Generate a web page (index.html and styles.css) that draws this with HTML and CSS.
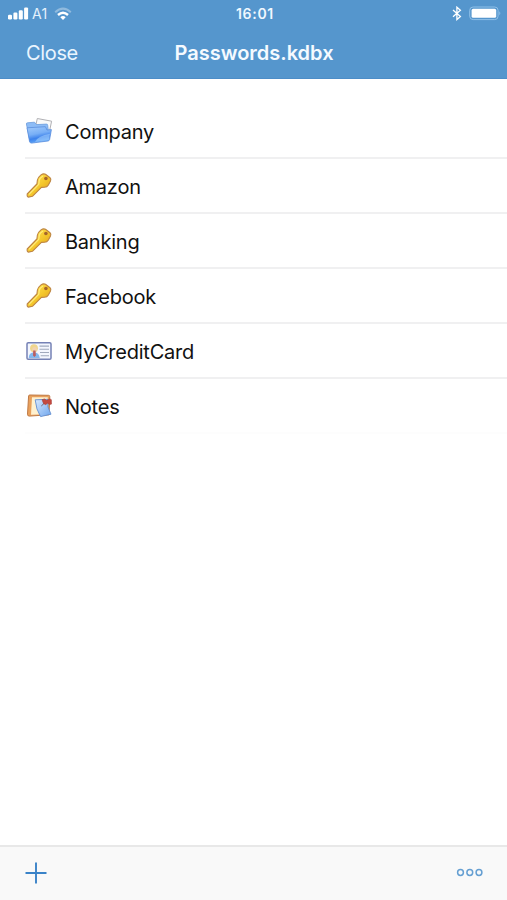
FILE: index.html
```
<!DOCTYPE html>
<html lang="en">
    <head>
        <meta charset="utf-8">
        <title>Passwords.kdbx</title>
        <link rel="stylesheet" href="styles.css">
    </head>
    <body>
        <svg class="defs" width="0" height="0">
            <defs>
                <linearGradient id="folderFill" x1="0" y1="0" x2="0.3" y2="1">
                    <stop offset="0" stop-color="#a3cbfb"/>
                    <stop offset="0.5" stop-color="#78aff6"/>
                    <stop offset="0.75" stop-color="#3d82ec"/>
                    <stop offset="1" stop-color="#5ea6f8"/>
                </linearGradient>
                <linearGradient id="keyFill" x1="0" y1="0" x2="1" y2="1">
                    <stop offset="0.2" stop-color="#ffe04f"/>
                    <stop offset="0.55" stop-color="#f3c52a"/>
                    <stop offset="0.9" stop-color="#dc9a25"/>
                </linearGradient>
                <linearGradient id="noteFill" x1="0" y1="0" x2="1" y2="1">
                    <stop offset="0" stop-color="#d8e9ff"/>
                    <stop offset="1" stop-color="#6ea6ee"/>
                </linearGradient>
                <symbol id="key" viewBox="0 0 28 28">
                    <path d="M16 2.9Q18.5 1.2 20.5 2.3L25 5.7Q26.4 7 25.5 9L23.4 13Q22 15.4 19.3 15.3L16.4 15.4 7.4 24.3 3.4 25.1Q1.9 25 2.2 22L11.9 12 12.4 8Q12.8 5.5 16 2.9Z" fill="url(#keyFill)" stroke="#bd8442" stroke-width="1.1" stroke-linejoin="round"/>
                    <path d="M4 22.4 13.8 12.3 14.3 8Q14.8 6 18 4" fill="none" stroke="#ffec7e" stroke-width="1.2"/>
                    <circle cx="20.9" cy="6.5" r="1.8" fill="#a5642b"/>
                </symbol>
            </defs>
        </svg>
        <div class="header">
            <div class="statusbar">
                <div class="statusleft">
                    <svg class="signal" width="21" height="13" viewBox="0 0 21 13" fill="#fff">
                        <rect x="0" y="7.7" width="4" height="4.8" rx="1.2"/>
                        <rect x="5.4" y="5.5" width="4" height="7" rx="1.2"/>
                        <rect x="10.8" y="3.2" width="4" height="9.3" rx="1.2"/>
                        <rect x="16.1" y="0.4" width="4" height="12.1" rx="1.2"/>
                    </svg>
                    <span class="carrier">A1</span>
                    <svg class="wifi" width="18" height="14" viewBox="0 0 18 14" fill="none" stroke="#fff" stroke-width="2">
                        <path d="M1.2 5.2Q9-2 16.8 5.2" opacity="0.35"/>
                        <path d="M4 8Q9 3.5 14 8" stroke-width="2.4"/>
                        <path d="M6.3 10.2Q9 8 11.7 10.2L9 12.9Z" fill="#fff" stroke="none"/>
                    </svg>
                </div>
                <div class="clock">16:01</div>
                <div class="statusright">
                    <svg width="10" height="15" viewBox="0 0 10 15" fill="none" stroke="#fff" stroke-width="1.3">
                        <path d="M1 4 8.4 10.6 4.9 13.6V1.2L8.4 4.3 1 10.8"/>
                    </svg>
                    <svg width="33" height="15" viewBox="0 0 33 15">
                        <rect x="0.7" y="1" width="28.4" height="12.6" rx="3.4" fill="none" stroke="#8fc0e8" stroke-width="1"/>
                        <rect x="2.6" y="2.8" width="24.6" height="9" rx="1.6" fill="#fff"/>
                        <path d="M30.3 5.3Q32.4 7.3 30.3 9.3Z" fill="#8fc0e8"/>
                    </svg>
                </div>
            </div>
            <div class="navbar">
                <div class="close">Close</div>
                <div class="title">Passwords.kdbx</div>
                <div></div>
            </div>
        </div>
        <div class="list">
            <div class="row">
                <svg class="icon" viewBox="0 0 28 28">
                    <path d="M12.3 1.5 26.6 4.2 23.5 19 9 16.5Z" fill="#fafafa" stroke="#b0b0b4" stroke-width="1"/>
                    <path d="M1.4 7Q1.3 5.8 2.5 5.8L9.5 5.2 11.5 7.6 21.4 7.1Q22.6 7 22.7 8.2L24 20 5 24.5Z" fill="#8dbcf6" stroke="#6d9ddc" stroke-width="0.8"/>
                    <path d="M2 10.8 20.4 9.7 22 13 26.4 12.6 24.6 22.6Q24.3 23.8 23 24L6.6 26.1Q5.1 26.2 4.6 24.8Z" fill="url(#folderFill)" stroke="#5a8edd" stroke-width="0.8" stroke-linejoin="round"/>
                    <path d="M10 25Q13 18.6 25 16.8L23.9 22.4Q23.7 23.2 23 23.3Z" fill="#b3dcff" opacity="0.5"/>
                </svg>
                <span class="name">Company</span>
            </div>
            <div class="row">
                <svg class="icon"><use href="#key"/></svg>
                <span class="name">Amazon</span>
            </div>
            <div class="row">
                <svg class="icon"><use href="#key"/></svg>
                <span class="name">Banking</span>
            </div>
            <div class="row">
                <svg class="icon"><use href="#key"/></svg>
                <span class="name">Facebook</span>
            </div>
            <div class="row">
                <svg class="icon" viewBox="0 0 28 28">
                    <rect x="2" y="5.8" width="24" height="16.5" rx="1.3" fill="#f3f6fe" stroke="#7581b5" stroke-width="1.5"/>
                    <path d="M3.7 20.9Q4 15.5 9 15.2 14 15.5 14.8 20.9Z" fill="#84b8ed"/>
                    <circle cx="9" cy="11.2" r="3.9" fill="#efd68e"/>
                    <circle cx="9.6" cy="12.3" r="2.4" fill="#f2d3b0"/>
                    <path d="M8.2 13.5H10.5L10.9 18.5 9.4 20 8 18.5Z" fill="#ba5f61"/>
                    <path d="M14.5 9.1H24M14.5 12.3H24M15 15.5H24M15.7 18.7H24" stroke="#a0a9bd" stroke-width="1.1"/>
                </svg>
                <span class="name">MyCreditCard</span>
            </div>
            <div class="row">
                <svg class="icon" viewBox="0 0 28 28">
                    <path d="M3.6 4Q3.7 3 4.8 3L23.5 3.3Q24.8 3.3 24.8 4.6L24 22.8 4.2 24.1Q2.4 24 2.5 22.2Z" fill="#e8a05c" stroke="#c07a45" stroke-width="1" stroke-linejoin="round"/>
                    <path d="M7 5.2 22.8 5.2 22 22.2 6 22.8Z" fill="#fff1cf"/>
                    <path d="M10.2 7.8 22.8 7.3Q21.5 15 26 22.2L15.6 24.6Q11 17.5 10.2 7.8Z" fill="url(#noteFill)" stroke="#638fd0" stroke-width="0.9"/>
                    <path d="M16.3 14 19.3 11.2" stroke="#6c6875" stroke-width="1"/>
                    <path d="M17 7.7 19.5 6.9 21.5 8.3 25 6.9 26.4 7.7 26.5 12.1 25 12.6 22.4 11.2 20.8 12.7 18.6 11.7Z" fill="#c4493f" stroke="#a23b35" stroke-width="0.5"/>
                </svg>
                <span class="name">Notes</span>
            </div>
        </div>
        <div class="toolbar">
            <svg width="22" height="22" viewBox="0 0 22 22" fill="none" stroke="#3a83c8" stroke-width="1.9">
                <path d="M11 0.5V21.5M0.5 11H21.5"/>
            </svg>
            <svg width="27" height="9" viewBox="0 0 27 9" fill="none" stroke="#659fd2" stroke-width="1.5">
                <circle cx="4.5" cy="4.5" r="2.9"/>
                <circle cx="13.8" cy="4.5" r="2.9"/>
                <circle cx="23" cy="4.5" r="2.9"/>
            </svg>
        </div>
    </body>
</html>
```
FILE: styles.css
```
*{
    box-sizing: border-box;
}
body{
    margin: 0;
    height: 900px;
    display: flex;
    flex-direction: column;
    background-color: white;
    color: #111;
    font-family: Inter, "Liberation Sans", sans-serif;
    font-size: 20px;
    overflow: hidden;
}
svg{
    display: block;
    flex-shrink: 0;
}
.defs{
    position: absolute;
}
.header{
    height: 79px;
    background-color: #5596cd;
    border-bottom: 1px solid #4c8dc8;
    color: white;
}
.statusbar{
    height: 27px;
    padding: 0 5px 0 8px;
    display: grid;
    grid-template-columns: 1fr auto 1fr;
    align-items: center;
    font-size: 14px;
}
.statusleft{
    display: flex;
    align-items: center;
}
.carrier{
    margin: 0 7px 0 3px;
    color: #e3f1fc;
    letter-spacing: 0.2px;
}
.clock{
    font-weight: 600;
    letter-spacing: 0.7px;
    color: #f0f8ff;
}
.statusright{
    display: flex;
    justify-content: flex-end;
    gap: 7px;
}
.navbar{
    height: 51px;
    padding: 0 25px 0 26px;
    display: grid;
    grid-template-columns: 1fr auto 1fr;
    align-items: center;
}
.close{
    color: #eaf5ff;
    letter-spacing: -0.35px;
}
.title{
    font-weight: 600;
    color: #f5faff;
}
.list{
    flex: 1;
    padding: 25px 0 0 25px;
}
.row{
    height: 55px;
    display: flex;
    align-items: center;
    border-bottom: 2px solid #f0f0f1;
}
.row:last-child{
    border-bottom-color: #fdfdfd;
}
.icon{
    width: 28px;
    height: 28px;
    margin-right: 12px;
}
.name{
    padding-top: 2px;
    letter-spacing: -0.23px;
}
.toolbar{
    height: 55px;
    padding: 0 24px 2px 25px;
    display: flex;
    align-items: center;
    justify-content: space-between;
    background-color: #f9f9f9;
    border-top: 2px solid #e8e8e8;
}
```
